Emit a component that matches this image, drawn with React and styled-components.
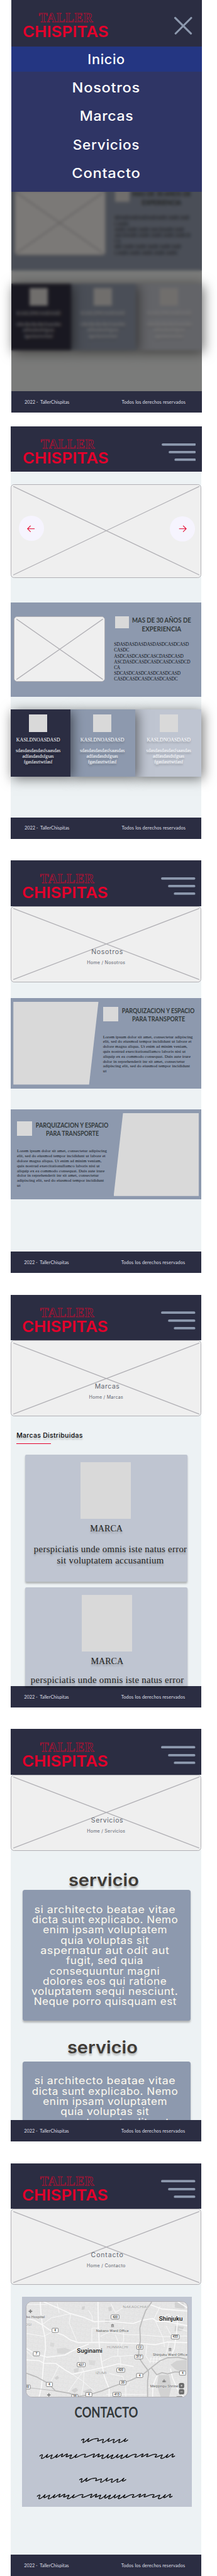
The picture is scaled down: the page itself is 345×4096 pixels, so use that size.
import React, { useLayoutEffect, useRef, useState } from "react";
import styled, { createGlobalStyle, css } from "styled-components";

/* 1rem is ten design pixels; the board is 487 design pixels wide. */
const GlobalStyle = createGlobalStyle`
  html { font-size: calc(100vw / 48.7); background: #fff; }
  body { margin: 0; overflow-x: hidden; }
  *, *::before, *::after { box-sizing: border-box; }
  p, h1, h2, h3, ul { margin: 0; padding: 0; font-weight: inherit; font-size: inherit; }
`;

const color = {
  navy: "#2b2d42",
  slate: "#8d99ae",
  mist: "#bfc5d1",
  paper: "#edf2f4",
  tile: "#d9d9d9",
  red: "#e4002b",
  line: "#b1b0b5",
};
const font = {
  tech: `Inter, "DejaVu Sans", sans-serif`,
  title: `Lato, "Open Sans", sans-serif`,
  serif: `"Liberation Serif", "Times New Roman", serif`,
  thin: `Lato, sans-serif`,
};

/* ---------- fitted text ---------- */

const FitSpan = styled.span`
  display: block;
  flex: none;
  width: max-content;
  white-space: pre;
`;

function Fit({ w, squeeze, children }) {
  const ref = useRef(null);
  const [style, setStyle] = useState({});
  useLayoutEffect(() => {
    const el = ref.current;
    const rem = parseFloat(getComputedStyle(document.documentElement).fontSize);
    const natural = el.getBoundingClientRect().width;
    const target = (w / 10) * rem;
    if (squeeze) {
      setStyle({ transform: `scaleX(${target / natural})` });
    } else {
      const gap = (target - natural) / Math.max(1, String(children).length - 1);
      setStyle({ letterSpacing: `${gap}px`, marginRight: `${-gap}px` });
    }
  }, []);
  return (
    <FitSpan ref={ref} style={style}>
      {children}
    </FitSpan>
  );
}

/* ---------- board and screens ---------- */

const Board = styled.div`
  display: flex;
  flex-direction: column;
  gap: 4.876rem;
  width: 48.7rem;
  padding-left: 2.4rem;
`;

const Screen = styled.section`
  position: relative;
  display: flex;
  flex-direction: column;
  width: 42.8rem;
  height: 92.6rem;
  background: ${color.paper};
  ${(p) => p.$first && css`margin: 0 0 -1.8rem 0.1rem;`}
`;

const Main = styled.main`
  flex: 1;
  min-height: 0;
  ${(p) => p.$clip && css`overflow: hidden;`}
`;

const HeaderBar = styled.header`
  flex: none;
  display: flex;
  justify-content: space-between;
  align-items: flex-start;
  height: ${(p) => (p.$tall ? 10.5 : 10.2)}rem;
  margin-right: ${(p) => (p.$wide ? -0.1 : 0)}rem;
  padding: 0 1.33rem 0 ${(p) => (p.$wide ? 2.8 : 2.7)}rem;
  background: ${color.navy};
`;

const LogoSvg = styled.svg`
  width: 19.4rem;
  height: 5.6rem;
  margin-top: 3rem;
  overflow: visible;
`;
const BurgerSvg = styled.svg`
  width: 7.7rem;
  height: 4.2rem;
  margin-top: 3.7rem;
`;
const CloseSvg = styled.svg`
  width: 4.2rem;
  height: 4.2rem;
  margin: 3.6rem 0.8rem 0 0;
`;

const Logo = ({ x = 39 }) => (
  <LogoSvg viewBox="0 0 194 56">
    <text x={x} y="20" fontFamily={font.serif} fontSize="28.6" fontWeight="700" textLength="121" fill="none" stroke={color.red} strokeWidth="0.75">
      TALLER
    </text>
    <text x="-1.5" y="53" fontFamily={font.tech} fontSize="34.6" fontWeight="600" textLength="193" lengthAdjust="spacingAndGlyphs" fill={color.red}>
      CHISPITAS
    </text>
  </LogoSvg>
);

const Burger = ({ first = 4 }) => (
  <BurgerSvg viewBox="0 0 77 42" stroke={color.slate} strokeWidth="5.4" strokeLinecap="round">
    <path d={`M2.7 ${first}H74.3M18.4 21H74.3M31.4 38H74.3`} />
  </BurgerSvg>
);

const Header = ({ wide, first, logoX }) => (
  <HeaderBar $wide={wide}>
    <Logo x={logoX} />
    <Burger first={first} />
  </HeaderBar>
);

const FooterBar = styled.footer`
  flex: none;
  display: flex;
  justify-content: space-between;
  align-items: center;
  height: 4.8rem;
  padding: 0.2rem ${(p) => (p.$wide ? 3.57 : 3.67)}rem 0 ${(p) => (p.$wide ? 3.1 : 3)}rem;
  background: ${color.navy};
  color: #dcdde2;
  font: 400 1.03rem/1.4rem ${font.thin};
`;

const Footer = ({ wide }) => (
  <FooterBar $wide={wide}>
    <Fit w={100.6}>{"2022 -  TallerChispitas"}</Fit>
    <Fit w={143.2}>Todos los derechos reservados</Fit>
  </FooterBar>
);

/* ---------- image placeholder ---------- */

const Frame = styled.div`
  position: relative;
  flex: none;
  width: ${(p) => p.$w / 10}rem;
  height: ${(p) => p.$h / 10}rem;
  border: 0.2rem solid ${color.line};
  border-radius: 0.75rem;
  background: #efefef;
`;
const Cross = styled.svg`
  position: absolute;
  inset: -0.2rem;
  width: calc(100% + 0.4rem);
  height: calc(100% + 0.4rem);
`;
const Placeholder = ({ w, h, children, className }) => (
  <Frame $w={w} $h={h} className={className}>
    <Cross viewBox={`0 0 ${w} ${h}`} preserveAspectRatio="none" stroke={color.line} strokeWidth="1.8" strokeLinecap="round">
      <path d={`M6.5 6.5L${w - 6.5} ${h - 6.5}M${w - 6.5} 6.5L6.5 ${h - 6.5}`} />
    </Cross>
    {children}
  </Frame>
);

const Lines = styled.div`
  display: flex;
  flex-direction: column;
  align-items: ${(p) => (p.$left ? "flex-start" : "center")};
`;

/* ---------- home ---------- */

const Slider = styled.div`
  padding-top: ${(p) => (p.$lead || 28) / 10}rem;
`;
const SlideButton = styled.span`
  position: absolute;
  top: ${(p) => (p.$next ? 7.1 : 7)}rem;
  ${(p) => (p.$next ? "right: 1.3rem;" : "left: 1.7rem;")}
  display: flex;
  align-items: center;
  justify-content: center;
  width: 5.6rem;
  height: 5.6rem;
  border-radius: 50%;
  background: #f6f4fe;
  svg { width: 1.8rem; height: 1.6rem; }
`;
const Arrow = ({ next }) => (
  <svg viewBox="0 0 18 16" fill="none" stroke={color.red} strokeWidth="1.5">
    <path d={next ? "M1 8.2H17M10 1.4L17 8.2L10 15" : "M17 8.2H1M8 1.4L1 8.2L8 15"} />
  </svg>
);

const Feature = styled.section`
  display: flex;
  height: 21.2rem;
  margin-top: 5.5rem;
  padding-left: 0.73rem;
  background: ${color.slate};
`;
const FeatureImage = styled(Placeholder)`
  margin-top: 3.2rem;
`;
const FeatureText = styled.div`
  margin-left: 2rem;
  padding-top: 2.97rem;
`;
const TitleRow = styled.div`
  display: flex;
  align-items: flex-start;
  color: #33393b;
  font: 700 1.5rem/${(p) => p.$lh / 10}rem ${font.title};
`;
const IconTile = styled.span`
  flex: none;
  width: ${(p) => p.$w / 10}rem;
  height: ${(p) => p.$h / 10}rem;
  background: ${color.tile};
`;
const FeatureTile = styled(IconTile)`
  margin: 0.23rem 0 0 0.2rem;
`;
const TitleLines = styled(Lines)`
  width: ${(p) => p.$w / 10}rem;
`;
const FeatureBody = styled(Lines)`
  margin-top: 1.86rem;
  color: #11151c;
  font: 400 1.04rem/1.3rem ${font.serif};
`;

const Trio = styled.section`
  display: flex;
  height: 15rem;
  margin-top: 2.9rem;
`;
const Card = styled.article`
  position: relative;
  z-index: ${(p) => p.$z};
  display: flex;
  flex-direction: column;
  align-items: center;
  width: ${(p) => p.$w / 10}rem;
  padding: 1.1rem ${(p) => p.$pr / 10}rem 0 ${(p) => p.$pl / 10}rem;
  background: ${(p) => p.$bg};
  box-shadow: 0.4rem 0.4rem 2.6rem rgba(0, 0, 0, 0.55);
  color: #fff;
  font-family: ${font.serif};
  text-shadow: 0 0.4rem 0.4rem rgba(0, 0, 0, 0.25);
`;
const CardTitle = styled.h3`
  margin-top: 1.17rem;
  font-size: 1.13rem;
  line-height: 1.4rem;
`;
const CardBody = styled(Lines)`
  margin-top: 1.01rem;
  font-size: 1.1rem;
  line-height: 1.3rem;
`;

const featureLines = [
  ["SDASDASDASDASDASDCASDCASD", 168],
  ["CASDC", 34],
  ["ASDCASDCASDCASCDASDCASD", 156],
  ["ASCDASDCASDCASDCASDCASDCD", 171],
  ["CA", 13.7],
  ["SDCASDCASDCASDCASDCASD", 149.3],
  ["CASDCASDCASDCASDCASDC", 143],
];
const cards = [
  { w: 134, pl: 0, pr: 11, bg: color.navy },
  { w: 146, pl: 0, pr: 3, bg: color.slate },
  { w: 148, pl: 1, pr: 0, bg: color.mist },
];

const HomeContent = ({ lead }) => (
  <>
    <Slider $lead={lead}>
      <Placeholder w={428} h={210}>
        <SlideButton><Arrow /></SlideButton>
        <SlideButton $next><Arrow next /></SlideButton>
      </Placeholder>
    </Slider>
    <Feature>
      <FeatureImage w={204.7} h={146.7} />
      <FeatureText>
        <TitleRow $lh={20}>
          <FeatureTile $w={32} $h={26} />
          <TitleLines as="h2" $w={144.6}>
            <Fit w={132.3} squeeze>MAS DE 30 AÑOS DE</Fit>
            <Fit w={88.4} squeeze>EXPERIENCIA</Fit>
          </TitleLines>
        </TitleRow>
        <FeatureBody $left>
          {featureLines.map(([t, w]) => <Fit key={t} w={w}>{t}</Fit>)}
        </FeatureBody>
      </FeatureText>
    </Feature>
    <Trio>
      {cards.map((c, i) => (
        <Card key={c.bg} $w={c.w} $pl={c.pl} $pr={c.pr} $bg={c.bg} $z={3 - i}>
          <IconTile $w={41} $h={39} />
          <CardTitle><Fit w={98.6}>KASLDNOASDASD</Fit></CardTitle>
          <CardBody>
            <Fit w={100.7}>sdasdasdasdasfsaasdas</Fit>
            <Fit w={70.6}>adfasdasdsfgsas</Fit>
            <Fit w={64.6}>fgasfasrtwtfasf</Fit>
          </CardBody>
        </Card>
      ))}
    </Trio>
  </>
);

/* ---------- open menu ---------- */

const Veil = styled.div`
  position: absolute;
  z-index: 5;
  inset: 10.5rem 0 4.8rem;
  background: rgba(8, 4, 0, 0.5);
  backdrop-filter: blur(0.4rem);
`;
const Menu = styled.nav`
  position: absolute;
  z-index: 6;
  top: 10.5rem;
  left: 0;
  width: 100%;
  height: 32.5rem;
  background: #2f3565;
`;
const MenuItem = styled.div`
  display: flex;
  align-items: center;
  justify-content: center;
  height: ${(p) => (p.$active ? 5.6 : 6.4)}rem;
  margin-bottom: ${(p) => (p.$active ? 0.4 : 0)}rem;
  background: ${(p) => (p.$active ? "#243682" : "none")};
  color: #fff;
  font: 500 3rem/1 ${font.tech};
  letter-spacing: 0.03em;
`;
const menu = [["Inicio", 84], ["Nosotros", 153], ["Marcas", 121], ["Servicios", 150], ["Contacto", 154]];

/* ---------- inner pages ---------- */

const HeroText = styled(Lines)`
  position: relative;
  padding-top: 9.3rem;
  color: #62666f;
  font-family: ${font.tech};
`;
const HeroTitle = styled.h1`
  margin-left: 0.46rem;
  font-size: 1.48rem;
  line-height: 2rem;
  font-weight: 400;
`;
const Crumb = styled.p`
  margin-top: 0.68rem;
  font-size: 1rem;
  line-height: 1.4rem;
`;
const Hero = ({ name, w, cw }) => (
  <Placeholder w={428} h={171}>
    <HeroText>
      <HeroTitle><Fit w={w}>{name}</Fit></HeroTitle>
      <Crumb><Fit w={cw}>{`Home / ${name}`}</Fit></Crumb>
    </HeroText>
  </Placeholder>
);

const Story = styled.article`
  display: flex;
  flex-direction: ${(p) => (p.$flip ? "row-reverse" : "row")};
  justify-content: flex-start;
  height: 20.3rem;
  margin-top: ${(p) => (p.$flip ? 4.6 : 3.6)}rem;
  padding: 0 0.6rem;
  background: ${color.slate};
`;
const StoryShape = styled.div`
  flex: none;
  width: 19.1rem;
  height: 18.6rem;
  margin-top: ${(p) => (p.$flip ? 0.9 : 0.8)}rem;
  background: ${color.tile};
  clip-path: ${(p) =>
    p.$flip ? "polygon(11% 0, 100% 0, 100% 100%, 0 100%)" : "polygon(0 0, 100% 0, 89% 100%, 0 100%)"};
`;
const StoryText = styled.div`
  width: 21.5rem;
  margin: ${(p) => (p.$flip ? "2.7rem 0.2rem 0 0" : "1.93rem 0 0 1rem")};
`;
const StoryBody = styled(Lines)`
  margin-top: 2.38rem;
  color: #11151c;
  font: 400 0.96rem/1.1rem ${font.serif};
`;
const storyLines = [
  ["Lorem ipsum dolor sit amet, consectetur adipiscing", 201.7],
  ["elit, sed do eiusmod tempor incididunt ut labore et", 198.7],
  ["dolore magna aliqua. Ut enim ad minim veniam,", 189.7],
  ["quis nostrud exercitationullamco laboris nisi ut", 185.7],
  ["aliquip ex ea commodo consequat. Duis aute irure", 196.7],
  ["dolor in reprehenderit inr sit amet, consectetur", 183.7],
  ["adipiscing elit, sed do eiusmod tempor incididunt", 195],
  ["ut", 8],
];
const StoryBlock = ({ flip }) => (
  <Story $flip={flip}>
    <StoryShape $flip={flip} />
    <StoryText $flip={flip}>
      <TitleRow $lh={19}>
        <IconTile $w={34} $h={33} />
        <TitleLines as="h2" $w={180.5}>
          <Fit w={163.2} squeeze>PARQUIZACION Y ESPACIO</Fit>
          <Fit w={118.8} squeeze>PARA TRANSPORTE</Fit>
        </TitleLines>
      </TitleRow>
      <StoryBody $left>
        {storyLines.map(([t, w]) => <Fit key={t} w={w}>{t}</Fit>)}
      </StoryBody>
    </StoryText>
  </Story>
);

const BrandsTitle = styled.h2`
  margin: 3.4rem 0 0 1.3rem;
  color: #0b0b0d;
  font: 500 1.48rem/2rem ${font.tech};
  text-shadow: 0 0.4rem 0.4rem rgba(0, 0, 0, 0.25);
`;
const Underline = styled.hr`
  width: 7.9rem;
  height: 0.12rem;
  margin: 0.6rem 0 0 1.2rem;
  border: 0;
  background: ${color.red};
`;
const Brand = styled.article`
  position: relative;
  display: flex;
  flex-direction: column;
  align-items: center;
  width: 36.5rem;
  height: ${(p) => p.$h / 10}rem;
  margin: ${(p) => p.$gap / 10}rem 0 0 3.2rem;
  padding-top: 1.7rem;
  border-radius: ${(p) => (p.$cut ? "0.3rem 0.3rem 0 0" : "0.3rem")};
  background: ${color.mist};
  box-shadow: 0 0.4rem 0.4rem rgba(0, 0, 0, 0.25);
  color: #1f1f21;
  font-family: ${font.serif};
  text-shadow: 0 0.4rem 0.4rem rgba(0, 0, 0, 0.25);
`;
const BrandImage = styled.div`
  width: 11.3rem;
  height: 12.8rem;
  margin-left: ${(p) => p.$shift / 5}rem;
  background: ${color.tile};
`;
const BrandName = styled.h3`
  margin: 0.97rem 0 0 ${(p) => p.$shift / 5}rem;
  font-size: 2rem;
  line-height: 2.4rem;
`;
const BrandBody = styled(Lines)`
  margin: ${(p) => p.$gap / 10}rem 0 0 ${(p) => p.$shift / 5}rem;
  font-size: 2.1rem;
  line-height: 2.5rem;
`;

const ServiceTitle = styled.h2`
  display: flex;
  justify-content: center;
  margin: ${(p) => (p.$second ? "3.92rem 1.6rem 1.18rem 0" : "4.52rem 1.16rem 0.28rem 0")};
  color: #3f3b36;
  font: 600 3.8rem/4rem ${font.tech};
  text-shadow: 0 0.4rem 0.4rem rgba(0, 0, 0, 0.25);
`;
const ServiceCard = styled(Lines)`
  width: 37.7rem;
  height: 29.4rem;
  margin-left: 2.7rem;
  padding: 3.21rem 0.8rem 0 0;
  border-radius: 0.5rem;
  background: ${color.slate};
  box-shadow: 0 0.4rem 0.4rem rgba(0, 0, 0, 0.25);
  color: #fffbef;
  font: 400 2.3rem/2.3rem ${font.tech};
  letter-spacing: 0.03em;
`;
const serviceLines = [
  ["si architecto beatae vitae", 317.3],
  ["dicta sunt explicabo. Nemo", 328.3],
  ["enim ipsam voluptatem", 279],
  ["quia voluptas sit", 199],
  ["aspernatur aut odit aut", 289.7],
  ["fugit, sed quia", 173.7],
  ["consequuntur magni", 247.7],
  ["dolores eos qui ratione", 278.3],
  ["voluptatem sequi nesciunt.", 329],
  ["Neque porro quisquam est", 320.7],
];
const Service = ({ second, lines = serviceLines }) => (
  <>
    <ServiceTitle $second={second}><Fit w={158} squeeze>servicio</Fit></ServiceTitle>
    <ServiceCard>
      {lines.map(([t, w]) => <Fit key={t} w={w} squeeze>{t}</Fit>)}
    </ServiceCard>
  </>
);

/* ---------- contact ---------- */

const ContactCard = styled.section`
  display: flex;
  flex-direction: column;
  align-items: center;
  width: 38rem;
  height: 47.1rem;
  margin: 2.7rem 0 0 2.6rem;
  padding-top: 0.9rem;
  background: ${color.mist};
`;
const MapFrame = styled.div`
  flex: none;
  width: 36.3rem;
  height: 21.7rem;
  border: 0.2rem solid ${color.line};
  border-radius: 1.4rem;
  overflow: hidden;
  background: #e4e4e4;
  svg { display: block; width: 100%; height: 100%; }
`;
const ContactTitle = styled.h2`
  margin: 1.5rem 0.4rem 0 0;
  color: #33393b;
  font: 700 3.2rem/3.6rem ${font.title};
`;
const ScribbleSvg = styled.svg`
  flex: none;
  width: ${(p) => p.$w / 10}rem;
  height: 1.6rem;
  margin: ${(p) => p.$top / 10}rem 0 0 ${(p) => p.$shift / 5}rem;
`;

const badges = [
  ["4", 376, 1220], ["7", 250, 1377], ["427", 551, 1450], ["420", 778, 1130], ["420", 816, 1487],
  ["433", 1182, 1264], ["C2", 944, 1333], ["317", 937, 1398], ["4", 943, 1523], ["20", 830, 1571],
  ["413", 790, 1650], ["4", 602, 1651], ["4", 337, 1583], ["20", 188, 1600], ["20", 508, 1664],
  ["4", 1231, 1507], ["", 1210, 1678],
];
const labels = [
  ["Suginami", 522, 1369, 171, 39, "#111", 500],
  ["Shinjuku", 1073, 1157, 159, 39, "#111", 500],
  ["Nakano Ward Office", 651, 1232, 219, 24, "#777", 500],
  ["Shinjuku Ward Office", 1031, 1393, 232, 24, "#777", 500],
  ["Meijijingu Shrine", 1014, 1603, 187, 24, "#777", 500],
  ["bo Hospital", 182, 1136, 124, 24, "#777", 500],
  ["NAKAOCHIAI", 830, 1071, 168, 24, "#999", 400],
  ["HONMACHI", 722, 1342, 144, 24, "#999", 400],
  ["IZUMI", 647, 1515, 74, 24, "#999", 400],
  ["OGI", 176, 1187, 41, 24, "#999", 400],
];

const Map = () => (
  <MapFrame>
    <svg viewBox="183 1029 1077 639">
      <defs>
        <pattern id="blocks" width="34" height="30" patternUnits="userSpaceOnUse" patternTransform="rotate(8)">
          <path d="M0 6H34M0 16H20M12 24H34M7 0V30M17 6V24M26 0V18" stroke="#efefef" strokeWidth="1.8" fill="none" />
        </pattern>
      </defs>
      <rect x="183" y="1029" width="1077" height="639" fill="#e2e2e2" />
      <rect x="183" y="1029" width="1077" height="639" fill="url(#blocks)" />
      <g fill="#d2d2d2">
        <path d="M1070 1520H1140L1156 1600L1140 1668H1084L1060 1592Z" />
        <path d="M1150 1450L1190 1424L1260 1418V1494L1216 1498L1180 1480Z" />
        <path d="M1178 1031H1236L1246 1076L1180 1068Z" />
        <path d="M732 1066L754 1060L756 1088L736 1092Z" />
        <path d="M386 1344L440 1336L484 1352L440 1378L392 1376Z" opacity=".7" />
        <path d="M500 1480L536 1470L530 1500L504 1504Z" opacity=".8" />
        <path d="M484 1622L516 1604L530 1622L506 1640Z" />
        <path d="M560 1630L616 1610L624 1626L590 1648Z" />
        <path d="M370 1540L392 1524L402 1540L386 1552Z" />
        <path d="M1180 1190L1240 1196L1230 1222L1176 1226Z" />
        <path d="M600 1420L648 1424L640 1456L606 1450Z" opacity=".6" />
        <path d="M344 1300L372 1306L366 1332L342 1326Z" opacity=".6" />
        <path d="M710 1146H740V1170H710Z" opacity=".7" />
        <path d="M556 1060L576 1058L572 1080L554 1082Z" />
      </g>
      <g fill="none" stroke="#f9f9f9" strokeLinejoin="round" strokeLinecap="round">
        <g strokeWidth="7">
          <path d="M276 1029L280 1100L290 1184L308 1270L312 1340L298 1430L292 1520L284 1600L268 1668" />
          <path d="M183 1138L240 1154L288 1182L340 1218L430 1252L478 1284L530 1302L680 1300L940 1308L1050 1316L1130 1298L1260 1302" />
          <path d="M300 1029L400 1072L480 1108L560 1130L640 1162L720 1158L900 1174L960 1152L1030 1140L1060 1160L1120 1160L1260 1188" />
          <path d="M663 1029L666 1200L672 1320L690 1450L706 1530L738 1612L738 1668" />
          <path d="M183 1342L240 1376L320 1400L440 1386L520 1344L600 1312" />
          <path d="M183 1418L270 1424L300 1440L380 1442L440 1484L490 1514L640 1482L740 1460L800 1444L900 1462" />
          <path d="M1010 1046L1090 1076L1180 1084L1260 1090" />
          <path d="M1200 1029L1260 1066M1200 1120L1190 1240L1176 1340L1150 1400" />
          <path d="M1060 1520L1032 1590L1030 1668M1150 1480L1164 1540L1200 1620L1240 1668" />
        </g>
        <g strokeWidth="4">
          <path d="M183 1046H320M390 1040L402 1100M480 1108L470 1170L520 1290M288 1182L350 1136L478 1108" />
          <path d="M600 1086L624 1124L626 1164M622 1300V1206L668 1204M780 1100L750 1040M780 1100L860 1050" />
          <path d="M780 1250L800 1300L796 1390M834 1200L836 1290L812 1330M680 1260L740 1230L850 1248L940 1250L1100 1262L1260 1258" />
          <path d="M540 1400L546 1450L570 1500L566 1580L550 1668M490 1514L560 1560L640 1630M560 1500L500 1580L460 1640" />
          <path d="M690 1430L760 1396L900 1388M812 1400L818 1470M740 1510L830 1530L850 1600L850 1668M720 1650H996" />
          <path d="M1050 1160L1100 1270L1110 1330M990 1320L984 1390L1010 1430M1140 1300L1120 1380L1150 1400L1260 1380" />
          <path d="M183 1240L240 1250L300 1260L360 1228M400 1460L350 1560M183 1360L230 1400M1000 1600L1060 1600M890 1540L860 1590" />
          <path d="M1020 1400L1012 1440M1040 1396L1034 1440M1060 1396L1054 1440M1080 1390L1076 1430M1010 1412H1100M1010 1428H1090" />
          <path d="M1120 1190L1170 1280M1208 1210L1260 1224M1090 1130L1140 1110L1160 1150M1080 1060L1040 1140" />
        </g>
      </g>
      <g fill="none" stroke="#bbb" strokeWidth="7.5" strokeLinejoin="round">
        <path d="M1024 1029L984 1086L960 1150L944 1204L948 1290L938 1340L936 1400L962 1440L1000 1490L1003 1510L996 1560V1668" />
        <path d="M183 1508L250 1532L330 1576L378 1626L470 1642L530 1664L600 1654L690 1626L760 1598L880 1556L960 1520L1024 1468L1080 1424L1130 1404L1200 1400L1260 1414" />
        <path d="M1020 1470L1058 1518L1092 1504L1130 1512L1180 1498L1230 1502" />
        <path d="M183 1604L260 1612L378 1626" strokeWidth="4" />
      </g>
      <g fill="#808080">
        <path d="M206 1080h8v8h8v8h-8v8h-8v-8h-8v-8h8Z" />
        <path d="M330 1642h7v8h8v7h-8v8h-7v-8h-8v-7h8Z" />
        {[[761, 1188], [1147, 1349]].map(([x, y]) => (
          <path key={x} d={`M${x} ${y - 11}l10 5v3h-20v-3zM${x - 8} ${y - 1}h4v7h-4zM${x - 2} ${y - 1}h4v7h-4zM${x + 4} ${y - 1}h4v7h-4zM${x - 10} ${y + 7}h20v3h-20z`} />
        ))}
        <path d="M1100 1556h14v13h-14zM1095 1558h3v11h-3zM1116 1558h3v11h-3zM1104 1549h6v6h-6z" />
      </g>
      {labels.map(([t, x, y, w, size, fill, weight]) => (
        <text key={t} x={x} y={y} textLength={w} lengthAdjust="spacingAndGlyphs" fontSize={size} fill={fill} fontWeight={weight} fontFamily="Roboto, sans-serif" stroke="#f4f4f4" strokeWidth="3" paintOrder="stroke">
          {t}
        </text>
      ))}
      {badges.map(([t, x, y]) => {
        const w = t.length > 2 ? 54 : 42;
        return (
          <g key={`${x}-${y}`}>
            <rect x={x - w / 2} y={y - 14} width={w} height="28" rx="5" fill="#fff" stroke="#5c5c5c" strokeWidth="3" />
            <text x={x} y={y + 7} fontSize="20" fontWeight="700" fontFamily="Roboto, sans-serif" fill="#444" textAnchor="middle">{t}</text>
          </g>
        );
      })}
      <g fill="#6b6b6b">
        <rect x="1206" y="1573" width="36" height="36" rx="12" />
        <rect x="1206" y="1614" width="36" height="36" rx="12" />
      </g>
      <path d="M1218 1591h12M1224 1585v12M1216 1632h16" stroke="#ccc" strokeWidth="4" />
    </svg>
  </MapFrame>
);

const shortInk =
  "M549 523C556 518 562 515 566 516C570 518 556 536 560 540C568 542 590 520 600 512C598 520 588 530 592 533C604 534 618 510 660 512C670 516 654 526 658 530C668 530 684 518 697 517C700 522 686 538 692 541C704 540 724 522 737 511C734 520 724 530 730 532C742 530 756 518 770 517C772 522 758 538 765 541C778 540 798 518 808 517C812 520 796 538 802 540C814 540 836 524 848 512C846 520 834 530 840 532C848 532 856 526 861 522";
const longInk =
  "M269 628C276 622 284 618 287 620C290 624 276 642 280 645C292 646 310 630 322 617C320 626 310 636 316 638C328 636 342 622 352 620C356 624 338 642 344 646C358 646 376 630 388 617C386 626 374 636 380 638C392 636 410 618 422 614C428 616 410 630 416 633C428 632 440 618 454 614C460 618 440 632 448 634C458 632 470 624 482 620C488 624 464 642 474 645C488 646 506 630 518 617C516 626 502 636 510 638C530 636 548 612 576 617C582 622 564 632 572 636C592 636 612 618 636 614C642 618 622 634 630 637C640 634 656 618 668 614C674 618 654 632 662 634C672 632 684 624 696 620C700 624 682 642 688 645C702 646 720 630 732 617C730 626 718 638 726 641C738 638 752 622 762 620C766 624 744 642 750 645C764 646 784 630 796 617C794 626 782 636 790 639C800 638 814 624 826 620C830 624 808 642 816 645C830 646 846 630 860 618C858 626 846 636 854 638C872 636 892 612 918 617C924 622 904 632 912 636C930 636 948 618 964 614C970 618 948 632 956 634C968 632 982 618 996 614C1002 618 984 630 990 633C1008 632 1030 612 1054 617C1062 622 1040 632 1048 636C1062 636 1080 622 1094 620C1098 624 1078 642 1086 645C1100 646 1120 630 1132 617C1130 626 1116 636 1124 638C1136 636 1150 620 1166 614C1172 618 1154 632 1162 635C1168 634 1174 630 1178 628";

const Scribble = ({ long, top, shift }) => (
  <ScribbleSvg $w={long ? 306 : 108} $top={top} $shift={shift} viewBox={long ? "264 606 918 48" : "543 502 324 48"} fill="none" stroke="#0a0a0a" strokeWidth="5.5" strokeLinecap="round" strokeLinejoin="round">
    <path d={long ? longInk : shortInk} />
  </ScribbleSvg>
);

/* ---------- app ---------- */

export default function App() {
  return (
    <>
      <GlobalStyle />
      <Board>
        <Screen $first>
          <HeaderBar $tall>
            <Logo x={35} />
            <CloseSvg viewBox="0 0 42 42" stroke={color.slate} strokeWidth="4.4" strokeLinecap="round">
              <path d="M3.5 3.5L39 38.5M39.5 3.5L4.5 38.5" />
            </CloseSvg>
          </HeaderBar>
          <Main><HomeContent lead={25} /></Main>
          <Veil />
          <Menu>
            {menu.map(([t, w], i) => (
              <MenuItem key={t} $active={i === 0}><Fit w={w} squeeze>{t}</Fit></MenuItem>
            ))}
          </Menu>
          <Footer />
        </Screen>

        <Screen>
          <Header wide logoX={39} />
          <Main><HomeContent /></Main>
          <Footer wide />
        </Screen>

        <Screen>
          <Header />
          <Main>
            <Hero name="Nosotros" w={70.7} cw={86} />
            <StoryBlock />
            <StoryBlock flip />
          </Main>
          <Footer />
        </Screen>

        <Screen>
          <Header first={3} />
          <Main>
            <Hero name="Marcas" w={55.3} cw={76.7} />
            <BrandsTitle><Fit w={148.4}>Marcas Distribuidas</Fit></BrandsTitle>
            <Underline />
            <Brand $h={286} $gap={24}>
              <BrandImage $shift={-1} />
              <BrandName $shift={0.3}><Fit w={73}>MARCA</Fit></BrandName>
              <BrandBody $gap={23} $shift={9.2}>
                <Fit w={343.4}>perspiciatis unde omnis iste natus error</Fit>
                <Fit w={239.7}>sit voluptatem accusantium</Fit>
              </BrandBody>
            </Brand>
            <Brand $h={222} $gap={12} $cut>
              <BrandImage $shift={1} />
              <BrandName $shift={2}><Fit w={73}>MARCA</Fit></BrandName>
              <BrandBody $gap={19} $shift={2.2}>
                <Fit w={343.4}>perspiciatis unde omnis iste natus error</Fit>
              </BrandBody>
            </Brand>
          </Main>
          <Footer />
        </Screen>

        <Screen>
          <Header first={3} />
          <Main $clip>
            <Hero name="Servicios" w={71.7} cw={86} />
            <Service />
            <Service second lines={serviceLines.slice(0, 5)} />
          </Main>
          <Footer />
        </Screen>

        <Screen>
          <Header first={3} />
          <Main>
            <Hero name="Contacto" w={72.3} cw={86.7} />
            <ContactCard>
              <Map />
              <ContactTitle><Fit w={142.7} squeeze>CONTACTO</Fit></ContactTitle>
              <Scribble top={38} shift={-5} />
              <Scribble long top={18.5} shift={1} />
              <Scribble top={37.5} shift={-10} />
              <Scribble long top={21.5} shift={-5.3} />
            </ContactCard>
          </Main>
          <Footer />
        </Screen>
      </Board>
    </>
  );
}
